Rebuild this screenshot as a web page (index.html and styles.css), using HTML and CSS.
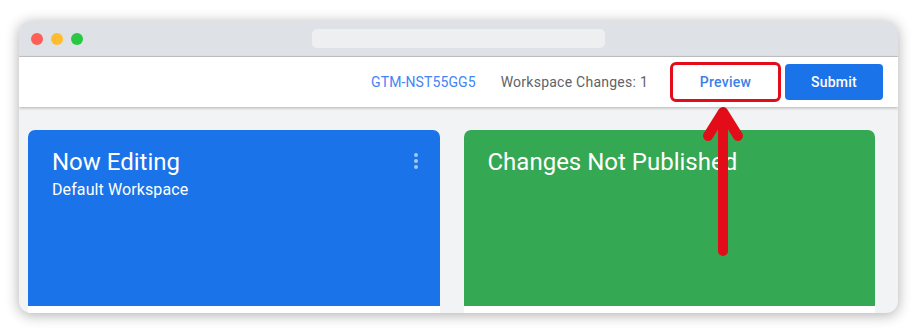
FILE: index.html
```html
<!DOCTYPE html>
<html>
<head>
<meta charset="utf-8">
<link rel="stylesheet" href="styles.css">
</head>
<body>
<div class="window">
  <div class="titlebar">
    <div class="lights">
      <span class="light red"></span>
      <span class="light yellow"></span>
      <span class="light green"></span>
    </div>
    <div class="address"></div>
  </div>
  <div class="header">
    <span class="container-id">GTM-NST55GG5</span>
    <span class="changes">Workspace Changes: 1</span>
    <button class="btn preview">Preview</button>
    <button class="btn submit">Submit</button>
  </div>
  <div class="content">
    <div class="card">
      <div class="card-top blue">
        <div class="card-head">
          <div>
            <div class="card-title">Now Editing</div>
            <div class="card-sub">Default Workspace</div>
          </div>
          <div class="kebab"><i></i><i></i><i></i></div>
        </div>
      </div>
    </div>
    <div class="card">
      <div class="card-top greenbg">
        <div class="card-title">Changes Not Published</div>
      </div>
    </div>
  </div>
</div>
<svg class="arrow" width="917" height="334" viewBox="0 0 917 334">
  <path d="M723 116 L723 251" />
  <path d="M708 136 L723 112 L738 136" />
</svg>
</body>
</html>
```
FILE: styles.css
```css
html, body {
  margin: 0;
  padding: 0;
  background: #ffffff;
}
body {
  width: 917px;
  height: 334px;
  overflow: hidden;
  position: relative;
  font-family: Roboto, "Liberation Sans", Arial, sans-serif;
  padding-top: 21px;
  box-sizing: border-box;
}
.window {
  margin-left: 19px;
  width: 879px;
  height: 292px;
  border-radius: 12px;
  overflow: hidden;
  box-shadow: 0 2px 14px rgba(0, 0, 0, 0.32);
  background: #f1f3f4;
  display: flex;
  flex-direction: column;
}
.titlebar {
  height: 35px;
  flex: none;
  background: #dee1e6;
  border-bottom: 1px solid #c4c6c9;
  display: flex;
  align-items: center;
  position: relative;
}
.lights {
  display: flex;
  gap: 8px;
  padding-left: 12px;
  margin-top: 1px;
}
.light {
  width: 12px;
  height: 12px;
  border-radius: 50%;
}
.light.red { background: #ff5f57; }
.light.yellow { background: #febc2e; }
.light.green { background: #28c840; }
.address {
  position: absolute;
  left: 293px;
  top: 8px;
  width: 293px;
  height: 19px;
  border-radius: 5px;
  background: #eeeff1;
}
.header {
  height: 50px;
  flex: none;
  background: #ffffff;
  display: flex;
  align-items: center;
  justify-content: flex-end;
  padding-right: 15px;
  box-shadow: 0 1px 3px rgba(0, 0, 0, 0.28);
  position: relative;
  z-index: 1;
  font-size: 14px;
}
.container-id {
  color: #4285f4;
  margin-right: 25px;
  letter-spacing: 0.1px;
}
.changes {
  color: #5f6368;
  margin-right: 22px;
  letter-spacing: 0.25px;
}
.btn {
  font-family: Roboto, "Liberation Sans", Arial, sans-serif;
  font-size: 14px;
  font-weight: 500;
  letter-spacing: 0.25px;
  cursor: pointer;
  padding: 0;
}
.preview {
  width: 111px;
  height: 40px;
  border: 3px solid #e20d18;
  border-radius: 6px;
  background: #ffffff;
  color: #3d7fe8;
  margin-right: 4px;
}
.submit {
  width: 98px;
  height: 36px;
  border: none;
  border-radius: 4px;
  background: #1a73e8;
  color: #ffffff;
}
.content {
  flex: 1;
  display: flex;
  gap: 24px;
  padding: 23px 23px 0 9px;
}
.card {
  flex: 1;
  background: #ffffff;
  border-radius: 7px 7px 0 0;
  overflow: hidden;
  height: 200px;
}
.card-top {
  height: 176px;
  box-sizing: border-box;
  padding: 16px 24px 0 24px;
  color: #ffffff;
}
.card-top.blue { background: #1a73e8; }
.card-top.greenbg { background: #34a853; }
.card-head {
  display: flex;
  justify-content: space-between;
  align-items: flex-start;
}
.card-title {
  font-size: 24px;
  line-height: 32px;
}
.card-sub {
  font-size: 16px;
  line-height: 20px;
  margin-top: 2px;
  letter-spacing: 0.1px;
}
.kebab {
  display: flex;
  flex-direction: column;
  gap: 2px;
  margin-top: 7px;
  margin-right: -2px;
}
.kebab i {
  display: block;
  width: 4px;
  height: 4px;
  border-radius: 50%;
  background: rgba(255, 255, 255, 0.6);
}
.arrow {
  position: absolute;
  left: 0;
  top: 0;
  pointer-events: none;
}
.arrow path {
  fill: none;
  stroke: #e20d18;
  stroke-width: 10;
  stroke-linecap: round;
  stroke-linejoin: round;
}
```
